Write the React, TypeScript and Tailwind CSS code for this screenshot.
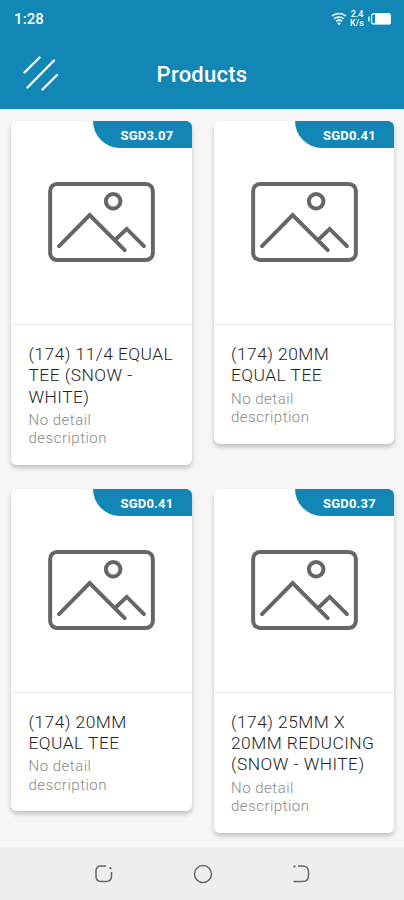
type Product = {
  id: number;
  name: string;
  price: string;
  description: string;
};

const productsData: Product[] = [
  {
    id: 1,
    name: "(174) 11/4 EQUAL TEE (SNOW - WHITE)",
    price: "SGD3.07",
    description: "No detail description",
  },
  {
    id: 2,
    name: "(174) 20MM EQUAL TEE",
    price: "SGD0.41",
    description: "No detail description",
  },
  {
    id: 3,
    name: "(174) 20MM EQUAL TEE",
    price: "SGD0.41",
    description: "No detail description",
  },
  {
    id: 4,
    name: "(174) 25MM X 20MM REDUCING (SNOW - WHITE)",
    price: "SGD0.37",
    description: "No detail description",
  },
];

const StatusBar = () => (
  <div className="flex h-[38px] items-center justify-between pl-[14px] pr-[13px]">
    <span className="text-[15px] font-medium tracking-[0.1px]">1:28</span>
    <div className="flex items-center">
      <svg width="16" height="14" viewBox="0 0 16 14" fill="none" stroke="currentColor" strokeWidth="1.6">
        <path d="M1.200 4.200C5 .6 11 .6 14.800 4.200" />
        <path d="M3.300 6.800c2.700-2.400 6.700-2.400 9.400 0" />
        <path d="M5.200 9.300c1.600-1.400 4-1.400 5.600 0" />
        <path d="M6 10.800h4L8 13.200z" fill="currentColor" stroke="none" />
      </svg>
      <div className="ml-[3px] w-[14px] text-center text-[9px] font-medium leading-[9px]">
        <div>2.4</div>
        <div>K/s</div>
      </div>
      <svg className="ml-1" width="23" height="12" viewBox="0 0 23 12">
        <rect x="0" y="3.5" width="2" height="5" fill="currentColor" opacity="0.7" />
        <rect x="3.6" y="0.9" width="18.6" height="10" rx="2" fill="none" stroke="currentColor" strokeWidth="1.1" />
        <rect x="7" y="0.600" width="15.600" height="10.600" rx="0.500" fill="currentColor" />
      </svg>
    </div>
  </div>
);

const Header = () => (
  <header className="h-[109px] bg-[#1287b6] text-white">
    <StatusBar />
    <div className="grid h-[73px] grid-cols-[64px_1fr_64px] items-center">
      <svg className="-mt-[2px] ml-[22px]" width="38" height="38" viewBox="0 0 38 38" fill="none" stroke="currentColor" strokeWidth="2.4" strokeLinecap="round">
        <path d="M2.500 17.500 17.500 2.500M5.500 32.500 32 5.500M20.500 34.500 35 20" />
      </svg>
      <h1 className="text-center text-[22px] font-medium tracking-[0.25px]">Products</h1>
    </div>
  </header>
);

const Placeholder = () => (
  <svg width="107" height="80" viewBox="0 0 108 81" fill="none" stroke="#666" strokeWidth="4" strokeLinecap="round" strokeLinejoin="miter">
    <rect x="2" y="2" width="104" height="77" rx="7" />
    <circle cx="65.8" cy="19.5" r="7.4" />
    <path d="M11 65 42 33.500 77.500 69M68.500 58 79.500 47.500 97 65" />
  </svg>
);

const ProductCard = ({ item }: { item: Product }) => (
  <div className="overflow-hidden rounded-[6px] bg-white shadow-[0_3px_5px_rgba(0,0,0,0.22)]">
    <div className="flex h-[204px] flex-col border-b border-[#e8e8e8]">
      <div className="flex h-[27px] w-[99px] items-center self-end rounded-bl-[27px] bg-[#1287b6] pl-[28px] pt-[2px] text-[13px] font-bold tracking-[0.2px] text-white">
        {item.price}
      </div>
      <div className="flex justify-center pl-px pt-[34px]">
        <Placeholder />
      </div>
    </div>
    <div className="pb-[17px] pl-[17.5px] pr-[14px] pt-[19px]">
      <h2 className="text-[17.4px] font-light leading-[21.3px] tracking-[0.45px] text-[#222]">{item.name}</h2>
      <p className="mt-[3px] w-[100px] text-[15px] font-light leading-[18.5px] tracking-[0.5px] text-[#888]">
        {item.description}
      </p>
    </div>
  </div>
);

const NavBar = () => (
  <nav className="flex h-[53px] items-center justify-between bg-[#eeeeee] pl-[94px] pr-[93px] text-[#666]">
    <svg width="20" height="20" viewBox="0 0 20 20" fill="none" stroke="currentColor" strokeWidth="1.5">
      <path d="M12 2H7Q2 2 2 7v5q0 5.500 5 5.500h5q5.500 0 5.500-5.500V8" />
      <path d="M15.500 4.200h2" strokeWidth="2" />
    </svg>
    <svg width="20" height="20" viewBox="0 0 20 20" fill="none" stroke="currentColor" strokeWidth="1.5">
      <circle cx="10" cy="10" r="8.500" />
    </svg>
    <svg width="20" height="20" viewBox="0 0 20 20" fill="none" stroke="currentColor" strokeWidth="1.5">
      <path d="M7 2h4q6.500 0 6.500 6v3.500q0 6-6 6H2.500" />
      <path d="M2.500 2.500h2" strokeWidth="2" />
    </svg>
  </nav>
);

const App = () => {
  return (
    <div className="flex h-[900px] w-[404px] flex-col overflow-hidden bg-[#f6f6f6] font-[Roboto,sans-serif]">
      <Header />
      {/* LIST */}
      <main className="grid flex-1 auto-rows-max grid-cols-2 items-start gap-x-[22px] gap-y-6 pl-[11px] pr-[10px] pt-3">
        {productsData.map((item) => (
          <ProductCard key={item.id} item={item} />
        ))}
      </main>
      <NavBar />
    </div>
  );
};

export default App;
